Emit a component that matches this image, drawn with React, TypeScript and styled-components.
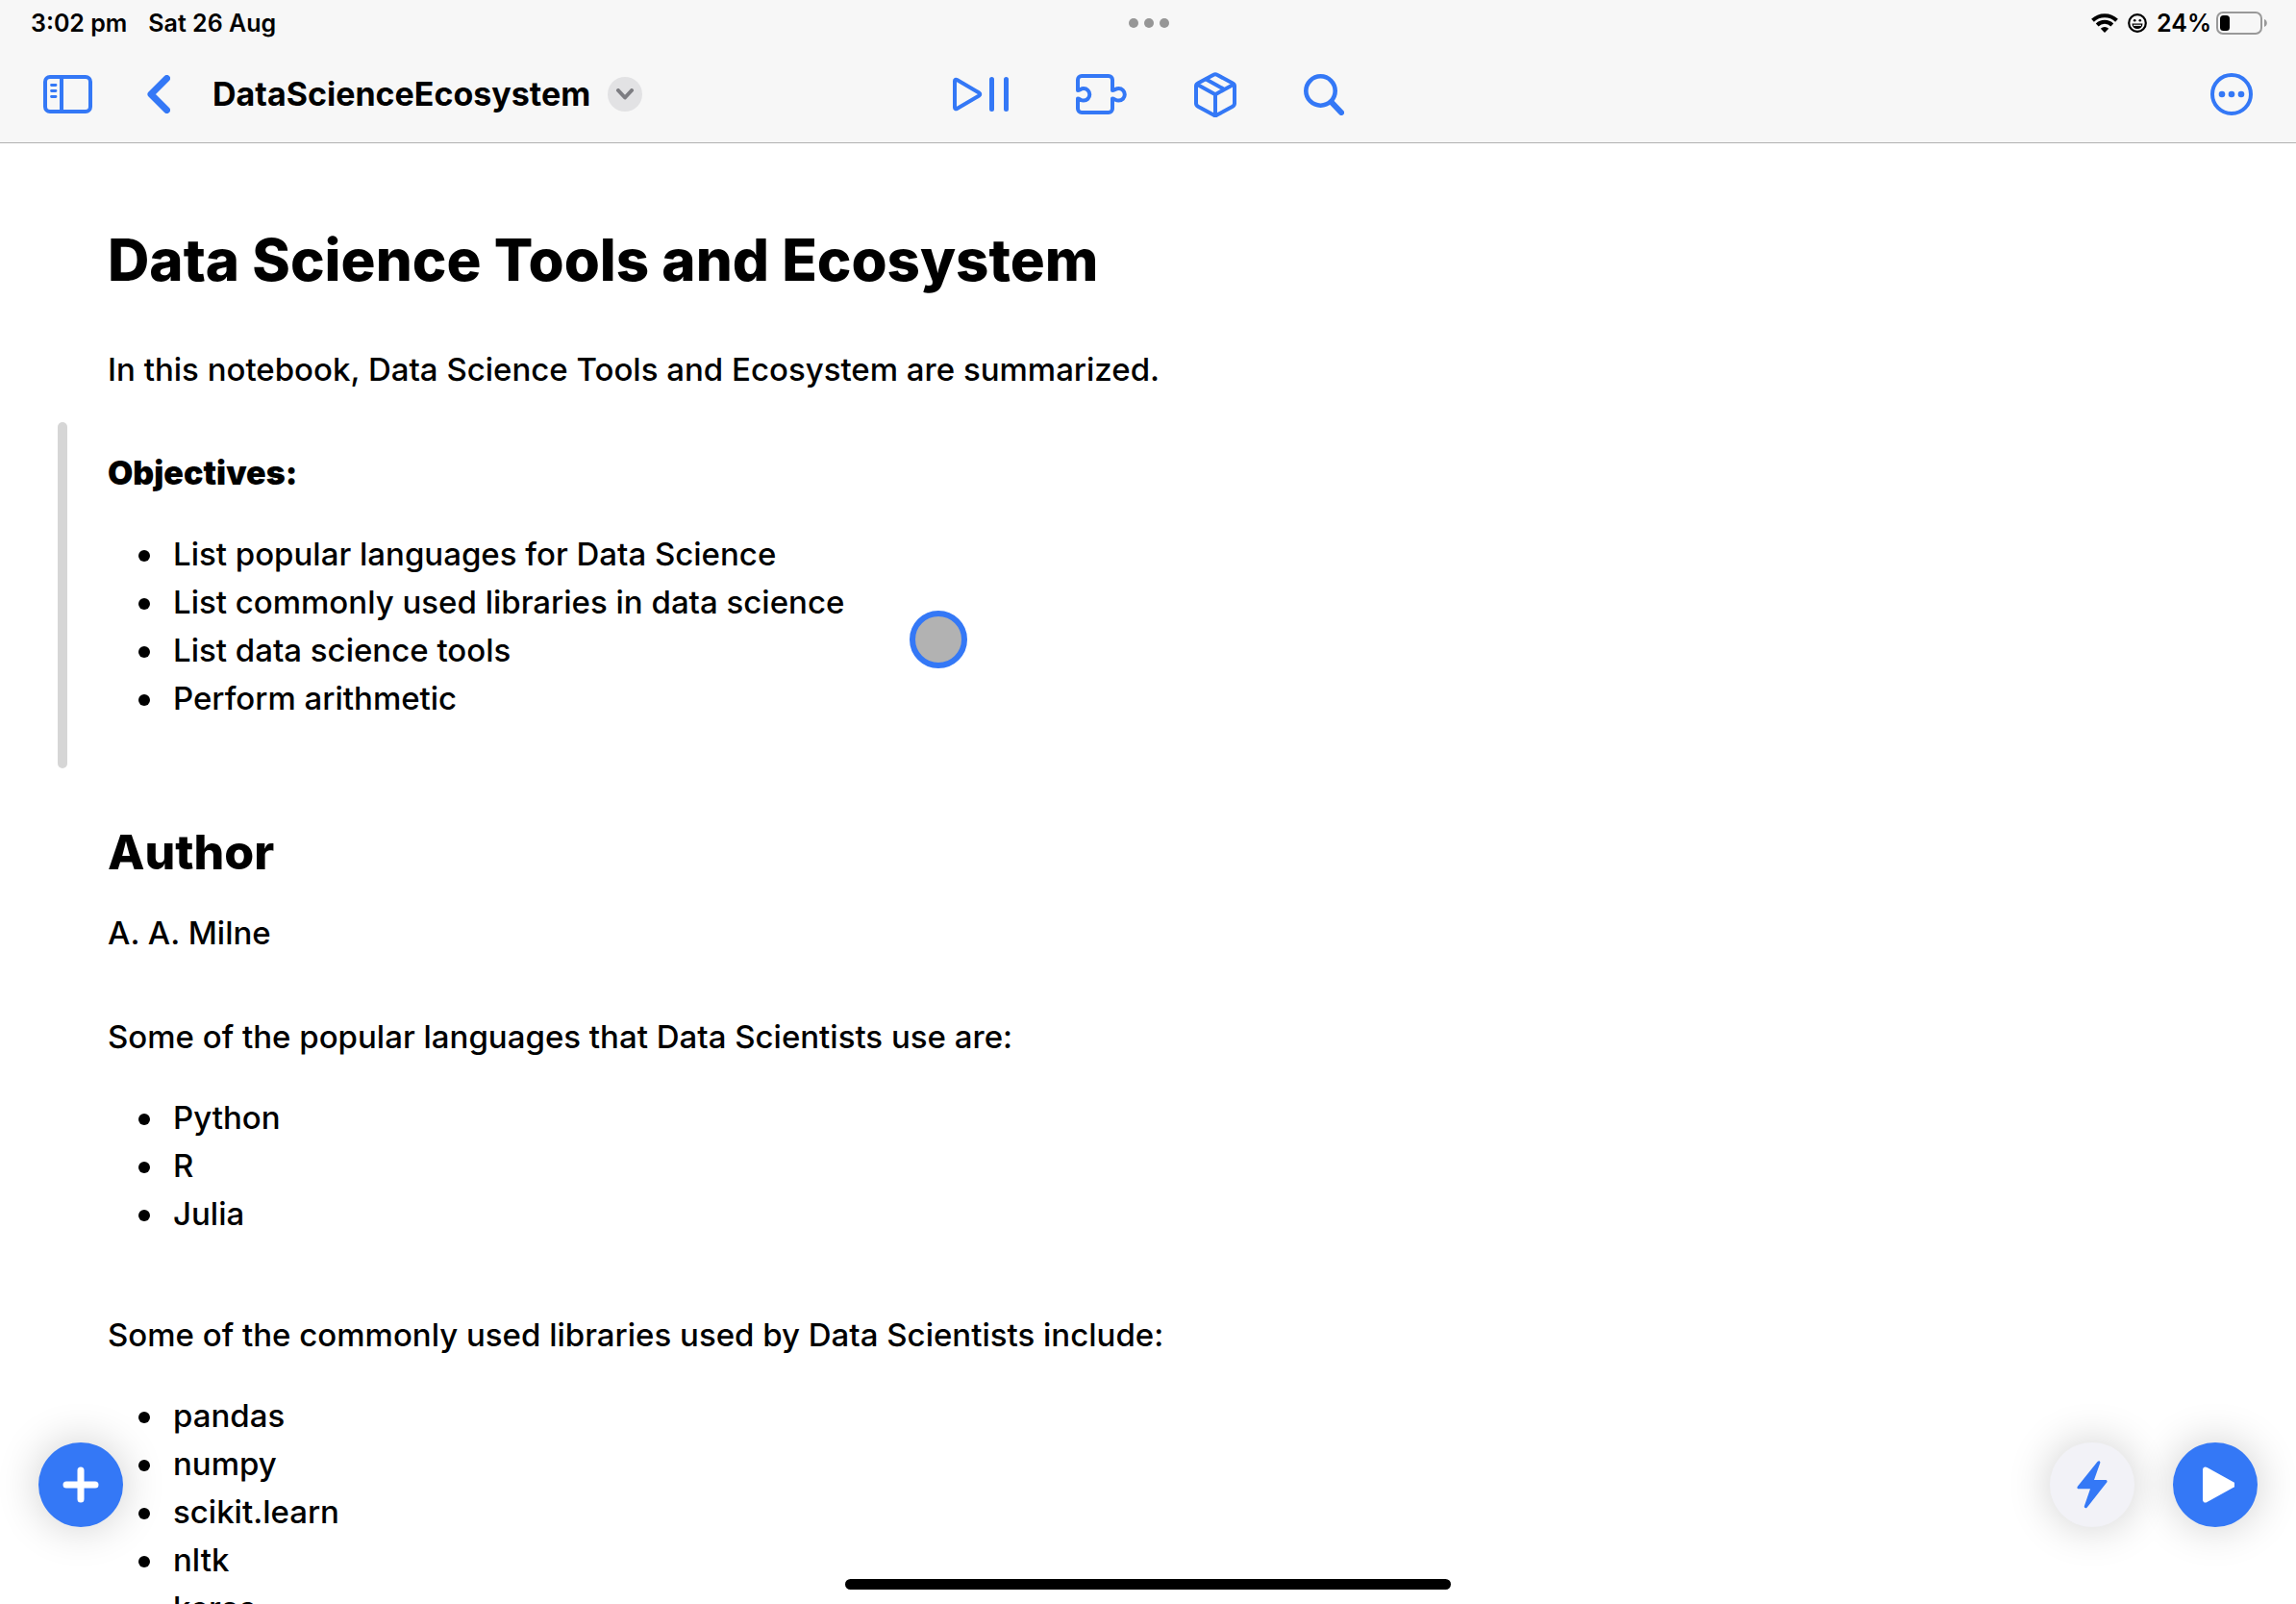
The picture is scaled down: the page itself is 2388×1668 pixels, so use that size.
import React from 'react';
import styled, { createGlobalStyle } from 'styled-components';

const blue = '#3478f6';

const GlobalStyle = createGlobalStyle`
  *, *::before, *::after { box-sizing: border-box; }
  html, body, #root { height: 100%; }
  body {
    margin: 0;
    background: #fff;
    color: #000;
    font-family: Inter, 'Liberation Sans', sans-serif;
    overflow: hidden;
  }
`;

const Page = styled.div`
  display: flex;
  flex-direction: column;
  height: 100%;
  overflow: hidden;
`;

const Header = styled.header`
  flex: none;
  background: #f7f7f7;
  border-bottom: 1px solid #b2b2b2;
`;

const Bar = styled.div`
  display: grid;
  grid-template-columns: 1fr auto 1fr;
  align-items: center;
`;

const StatusBar = styled(Bar)`
  height: 48px;
  padding: 0 30px 0 32px;
  font-size: 25px;
  font-weight: 600;
`;

const Toolbar = styled(Bar)`
  height: 100px;
  padding: 0 45px;
`;

const Group = styled.div<{ $gap: number; $end?: boolean }>`
  display: flex;
  align-items: center;
  justify-content: ${(p) => (p.$end ? 'flex-end' : 'flex-start')};
  gap: ${(p) => p.$gap}px;
`;

const IconButton = styled.button`
  display: flex;
  padding: 0;
  border: 0;
  background: none;
  color: ${blue};
  cursor: pointer;

  svg { display: block; }
`;

const Title = styled.h1`
  margin: 0;
  font-size: 34px;
  font-weight: 700;
  line-height: 44px;
`;

const TitleGroup = styled.div`
  display: flex;
  align-items: center;
  gap: 18px;
`;

const MenuButton = styled(IconButton)`
  width: 36px;
  height: 36px;
  align-items: center;
  justify-content: center;
  border-radius: 50%;
  background: #e2e2e4;
  color: #7d7d82;
`;

const Dots = styled(IconButton)`
  gap: 6px;

  i {
    width: 10px;
    height: 10px;
    border-radius: 50%;
    background: #969696;
  }
`;

const Notebook = styled.main`
  flex: 1;
  min-height: 0;
  overflow: hidden;
  padding: 62px 60px 0;
  font-size: 33px;
  font-weight: 500;
  line-height: 50px;
`;

const Cell = styled.section<{ $active?: boolean }>`
  padding: 28px 0 30px 42px;
  border-left: 10px solid transparent;
  position: relative;

  &::before {
    content: '';
    position: absolute;
    left: -10px;
    top: 0;
    bottom: 0;
    width: 10px;
    border-radius: 5px;
    background: ${(p) => (p.$active ? '#d6d6d6' : 'transparent')};
  }
`;

const Heading1 = styled.h2`
  margin: 0;
  font-size: 60px;
  font-weight: 800;
  line-height: 62px;
`;

const Heading2 = styled.h3`
  margin: 29px 0;
  font-size: 50px;
  font-weight: 800;
  line-height: 60px;
`;

const Heading4 = styled.h4`
  margin: 0;
  font-size: 34px;
  font-weight: 900;
  line-height: 50px;
`;

const Text = styled.p`
  margin: 0;
`;

const List = styled.ul`
  margin: 34px 0 18px;
  padding: 0 0 0 32px;
  list-style: none;
`;

const Item = styled.li`
  display: flex;
  align-items: center;
  gap: 24px;

  &::before {
    content: '';
    width: 12px;
    height: 12px;
    margin-top: 4px;
    border-radius: 50%;
    background: #000;
  }
`;

const Floating = styled.div<{ $side: 'left' | 'right' }>`
  position: fixed;
  bottom: 80px;
  ${(p) => p.$side}: 40px;
  display: flex;
  gap: 40px;
`;

const RoundButton = styled.button<{ $light?: boolean }>`
  display: flex;
  width: 88px;
  height: 88px;
  align-items: center;
  justify-content: center;
  padding: 0;
  border: 0;
  border-radius: 50%;
  background: ${(p) => (p.$light ? '#f2f2f7' : blue)};
  color: ${(p) => (p.$light ? blue : '#fff')};
  box-shadow: 0 0 46px rgba(0, 0, 0, 0.2);
  cursor: pointer;
`;

const Pointer = styled.div`
  position: fixed;
  left: 946px;
  top: 635px;
  width: 60px;
  height: 60px;
  border: 6px solid ${blue};
  border-radius: 50%;
  background: #b2b2b2;
`;

const HomeIndicator = styled.div`
  position: fixed;
  bottom: 15px;
  left: 50%;
  width: 630px;
  height: 11px;
  margin-left: -315px;
  border-radius: 6px;
  background: #000;
`;

const line = {
  fill: 'none',
  stroke: 'currentColor',
  strokeLinecap: 'round' as const,
  strokeLinejoin: 'round' as const,
};

const SidebarIcon = () => (
  <svg width="51" height="40" viewBox="0 0 51 40" {...line} strokeWidth="4">
    <rect x="2" y="2" width="47" height="36" rx="5" />
    <path d="M19 2v36" strokeLinecap="butt" />
    <path d="M8.500 10.500h4.500M8.500 16.500h4.500M8.500 22.500h4.500" strokeWidth="2.800" />
  </svg>
);

const BackIcon = () => (
  <svg width="24" height="40" viewBox="0 0 24 40" {...line} strokeWidth="7">
    <path d="M20.500 3.500L4 20l16.500 16.500" />
  </svg>
);

const ChevronDown = () => (
  <svg width="20" height="12" viewBox="0 0 20 12" {...line} strokeWidth="4">
    <path d="M3 2l7 7.500L17 2" />
  </svg>
);

const PlayPauseIcon = () => (
  <svg width="58" height="36" viewBox="0 0 58 36" {...line}>
    <path
      d="M2 4.200v27.600c0 1.300 1.200 1.800 2.300 1.200l23-13.500c1.300-.8 1.300-2.200 0-3L4.300 3C3.200 2.400 2 2.900 2 4.200z"
      strokeWidth="4"
    />
    <path d="M40.500 2.500v31M55.500 2.500v31" strokeWidth="5" />
  </svg>
);

const PuzzleIcon = () => (
  <svg width="53" height="42" viewBox="0 0 53 42" {...line} strokeWidth="4">
    <path d="M2 17V6a4 4 0 0 1 4-4h28a4 4 0 0 1 4 4v11c2 0 3.500-2 6.500-2a6.300 6.300 0 0 1 0 12.600c-3 0-4.500-2-6.500-2V36a4 4 0 0 1-4 4H6a4 4 0 0 1-4-4V25.600c2 0 3 2 6 2A6.300 6.300 0 0 0 8 15c-3 0-4 2-6 2z" stroke="none" />
    <path d="M2 17V6a4 4 0 0 1 4-4h28a4 4 0 0 1 4 4v11c2 0 3.500-2 6.500-2a6.300 6.300 0 0 1 0 12.600c-3 0-4.500-2-6.500-2V36a4 4 0 0 1-4 4H6a4 4 0 0 1-4-4V25.600c2 0 3 2 6 2A6.300 6.300 0 0 0 8 15c-3 0-4 2-6 2" />
  </svg>
);

const CubeIcon = () => (
  <svg width="44" height="47" viewBox="0 0 44 47" {...line} strokeWidth="4">
    <path d="M20.200 2.700L4 11.600c-1.300.7-2 1.600-2 3v18c0 1.400.7 2.400 2 3.100l16.200 8.900c1.200.7 2.400.7 3.600 0L40 35.700c1.300-.7 2-1.700 2-3.100v-18c0-1.400-.7-2.300-2-3L23.800 2.700c-1.200-.7-2.400-.7-3.600 0z" />
    <path d="M3 12.800l19 10.400 19-10.400M22 23.500V45M12.500 7.500L31.500 18" />
  </svg>
);

const SearchIcon = () => (
  <svg width="42" height="43" viewBox="0 0 42 43" {...line}>
    <circle cx="17.500" cy="17.500" r="15.200" strokeWidth="4.600" />
    <path d="M29 29.500L39 40" strokeWidth="6" />
  </svg>
);

const MoreIcon = () => (
  <svg width="44" height="44" viewBox="0 0 44 44">
    <circle cx="22" cy="22" r="20" fill="none" stroke="currentColor" strokeWidth="4" />
    <g fill="currentColor">
      <circle cx="12" cy="22" r="3.300" />
      <circle cx="22" cy="22" r="3.300" />
      <circle cx="32" cy="22" r="3.300" />
    </g>
  </svg>
);

const WifiIcon = () => (
  <svg width="28" height="20" viewBox="0 0 28 20" fill="none" stroke="#000">
    <path d="M1.500 7.300a18 18 0 0 1 25 0" strokeWidth="4" />
    <path d="M6.200 12a11.200 11.200 0 0 1 15.600 0" strokeWidth="4" />
    <path d="M14 20l-4.200-4.200a6 6 0 0 1 8.400 0z" fill="#000" stroke="none" />
  </svg>
);

const SmileIcon = () => (
  <svg width="20" height="20" viewBox="0 0 20 20">
    <circle cx="10" cy="10" r="8.800" fill="none" stroke="#000" strokeWidth="2.200" />
    <circle cx="7.200" cy="7.200" r="1.300" />
    <circle cx="12.800" cy="7.200" r="1.300" />
    <path d="M4.500 10.500h11a5.500 5.500 0 0 1-11 0z" />
    <path d="M6 12.300h8" stroke="#f7f7f7" strokeWidth="1.200" />
  </svg>
);

const BatteryIcon = () => (
  <svg width="53" height="24" viewBox="0 0 53 24">
    <rect x="1" y="1" width="46" height="22" rx="6" fill="none" stroke="#999" strokeWidth="2" />
    <rect x="4" y="4" width="10" height="16" rx="3.500" />
    <path d="M50 8c1.700.6 2.800 2.200 2.800 4s-1.100 3.400-2.800 4z" fill="#999" />
  </svg>
);

const PlusIcon = () => (
  <svg width="38" height="38" viewBox="0 0 38 38" {...line} strokeWidth="7">
    <path d="M19 4v30M4 19h30" />
  </svg>
);

const BoltIcon = () => (
  <svg width="32" height="50" viewBox="0 0 32 50" fill="currentColor">
    <path d="M21.500 1L1 26.500C-.2 28 .6 29.300 2.100 29.300H14L7.900 47c-.7 2.200 1.600 3 2.900 1.400L31 22.800c1.200-1.500.4-2.800-1.100-2.800H18l6.200-17.600C24.900.3 22.800-.6 21.500 1z" />
  </svg>
);

const PlayIcon = () => (
  <svg width="40" height="38" viewBox="0 0 40 38" fill="currentColor">
    <path d="M7 3.500v31c0 2.600 2.300 3.900 4.500 2.600l28-15.600c2.200-1.200 2.200-3.800 0-5L11.500.9C9.300-.4 7 .9 7 3.500z" />
  </svg>
);

const Bullets = ({ items }: { items: string[] }) => (
  <List>
    {items.map((item) => (
      <Item key={item}>{item}</Item>
    ))}
  </List>
);

export default function App() {
  return (
    <Page>
      <GlobalStyle />
      <Header>
        <StatusBar>
          <Group $gap={22}>
            <span>3:02 pm</span>
            <span>Sat 26 Aug</span>
          </Group>
          <Dots aria-label="Multitasking">
            <i />
            <i />
            <i />
          </Dots>
          <Group $gap={10} $end>
            <WifiIcon />
            <SmileIcon />
            <Group $gap={5}>
              <span>24%</span>
              <BatteryIcon />
            </Group>
          </Group>
        </StatusBar>
        <Toolbar>
          <Group $gap={57}>
            <IconButton aria-label="Sidebar"><SidebarIcon /></IconButton>
            <Group $gap={44}>
              <IconButton aria-label="Back"><BackIcon /></IconButton>
              <TitleGroup>
                <Title>DataScienceEcosystem</Title>
                <MenuButton aria-label="Document menu"><ChevronDown /></MenuButton>
              </TitleGroup>
            </Group>
          </Group>
          <Group $gap={70}>
            <IconButton aria-label="Run all"><PlayPauseIcon /></IconButton>
            <IconButton aria-label="Extensions"><PuzzleIcon /></IconButton>
            <IconButton aria-label="Packages"><CubeIcon /></IconButton>
            <IconButton aria-label="Search"><SearchIcon /></IconButton>
          </Group>
          <Group $gap={0} $end>
            <IconButton aria-label="More"><MoreIcon /></IconButton>
          </Group>
        </Toolbar>
      </Header>

      <Notebook>
        <Cell>
          <Heading1>Data Science Tools and Ecosystem</Heading1>
        </Cell>
        <Cell>
          <Text>In this notebook, Data Science Tools and Ecosystem are summarized.</Text>
        </Cell>
        <Cell $active>
          <Heading4>Objectives:</Heading4>
          <Bullets
            items={[
              'List popular languages for Data Science',
              'List commonly used libraries in data science',
              'List data science tools',
              'Perform arithmetic',
            ]}
          />
        </Cell>
        <Cell>
          <Heading2>Author</Heading2>
          <Text>A. A. Milne</Text>
        </Cell>
        <Cell>
          <Text>Some of the popular languages that Data Scientists use are:</Text>
          <Bullets items={['Python', 'R', 'Julia']} />
        </Cell>
        <Cell>
          <Text>Some of the commonly used libraries used by Data Scientists include:</Text>
          <Bullets items={['pandas', 'numpy', 'scikit.learn', 'nltk', 'keras']} />
        </Cell>
      </Notebook>

      <Pointer />
      <Floating $side="left">
        <RoundButton aria-label="Add cell"><PlusIcon /></RoundButton>
      </Floating>
      <Floating $side="right">
        <RoundButton $light aria-label="Quick actions"><BoltIcon /></RoundButton>
        <RoundButton aria-label="Run cell"><PlayIcon /></RoundButton>
      </Floating>
      <HomeIndicator />
    </Page>
  );
}
